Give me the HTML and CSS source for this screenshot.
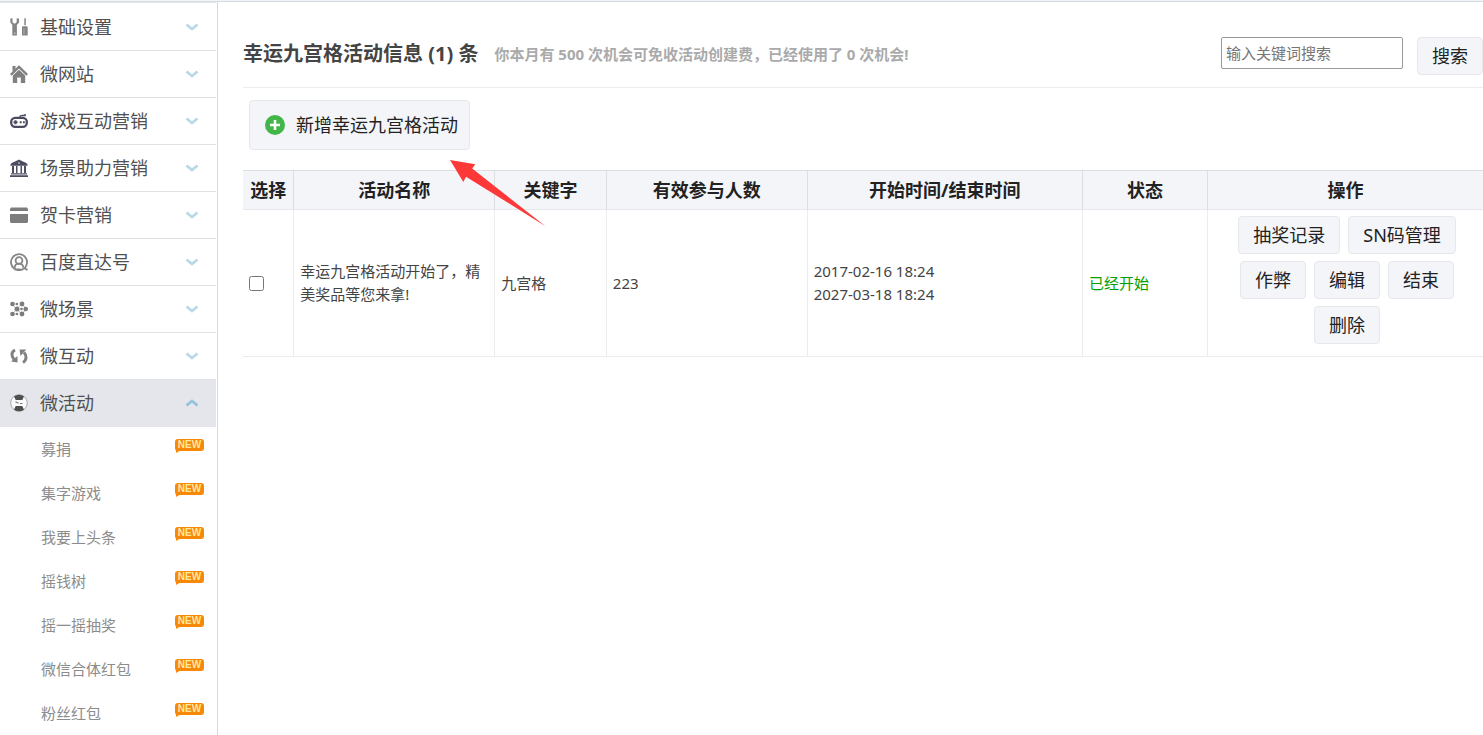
FILE: index.html
```html
<!DOCTYPE html>
<html lang="zh-CN">
<head>
<meta charset="utf-8">
<meta name="viewport" content="width=device-width, initial-scale=1">
<title>幸运九宫格活动信息</title>
<link rel="stylesheet" href="styles.css">
</head>
<body>
<svg class="defs" aria-hidden="true">
  <symbol id="down" viewBox="0 0 14 8"><path d="M1.500 1.500 7 6 12.500 1.500" fill="none" stroke="currentColor" stroke-width="2.800"/></symbol>
</svg>
<div class="topline"></div>
<div class="layout">
  <nav class="sidebar">
    <ul class="menu">
      <li><a class="item" href="#">
        <svg class="icon" viewBox="0 0 18 18" fill="#858585"><path d="M.3.5 2.500.2v3.700l1.500 1.500h1.200l1.500-1.500V.2l2.200.3.3 3.700-2.300 2.900V17.500H2.300V7.100L.3 4.200zM14.300.2h1.500v7h-1.500zM12.500 8.300h4.500l.7 1v8.200H12V9.300z"/><path d="M3.900 14.500h1.500V16H3.900z" fill="#bbb"/><path d="M14 10.500v6" stroke="#aaa"/></svg>
        <span>基础设置</span><svg class="chevron"><use href="#down"/></svg></a></li>
      <li><a class="item" href="#">
        <svg class="icon" viewBox="0 0 18 18" fill="#808080"><path d="M2.500 1h3v3.200l-3 2.500z"/><path d="M.8 9.800 9 2l8.200 7.800" fill="none" stroke="#808080" stroke-width="2.400"/><path d="M2.800 10.500 9 4.800l6.200 5.700V18h-4.400v-5.500H7.200V18H2.800z"/></svg>
        <span>微网站</span><svg class="chevron"><use href="#down"/></svg></a></li>
      <li><a class="item" href="#">
        <svg class="icon" viewBox="0 0 18 18" fill="none" stroke="#4b4b60"><path d="M10 5.500c0-2 .5-2 2.500-2h2.500V2" stroke-width="1.500"/><rect x="1.200" y="5.800" width="15.600" height="9" rx="4" stroke-width="2.300"/><path d="M3.500 10.300h4M5.500 8.300v4" stroke-width="2"/><path d="M9.700 10.300h2M13 10.300h1.800" stroke-width="2"/></svg>
        <span>游戏互动营销</span><svg class="chevron"><use href="#down"/></svg></a></li>
      <li><a class="item" href="#">
        <svg class="icon" viewBox="0 0 18 18" fill="#4c4c60"><path d="M.5 5.500C1 3.500 6 2.500 9 .5c3 2 8 3 8.500 5v1.200H.5zM2 7h2v7H2zm4 0h1.500v7H6zm4.500 0H12v7h-1.500zM14 7h2v7h-2zM1 14.300h16v1.300H1zM0 16.300h18V18H0z"/><circle cx="9" cy="4" r="1" fill="#aaa"/></svg>
        <span>场景助力营销</span><svg class="chevron"><use href="#down"/></svg></a></li>
      <li><a class="item" href="#">
        <svg class="icon" viewBox="0 0 18 18" fill="#7d7d7d"><path d="M1 1.500h16L18 3v2H0V3zM0 8h18v8l-1 1H1l-1-1z"/></svg>
        <span>贺卡营销</span><svg class="chevron"><use href="#down"/></svg></a></li>
      <li><a class="item" href="#">
        <svg class="icon" viewBox="0 0 18 18" fill="none" stroke="#858585" stroke-width="1.800"><path d="M13.500 15.800A8 8 0 1 1 16.500 12c-.5 1.500-1.200 2.500-2 3.300l3 1.800M4.500 16.500h6"/><circle cx="9" cy="7.500" r="3.400"/><path d="M4.800 14.700c0-2.500 1.800-4 4.200-4s4.200 1.500 4.200 4"/></svg>
        <span>百度直达号</span><svg class="chevron"><use href="#down"/></svg></a></li>
      <li><a class="item" href="#">
        <svg class="icon" viewBox="0 0 18 18" fill="#7c7c7c"><path d="M2 4.500 7 9l5-5.500L16 9l-4 5.500L7 9l-5 5M2 4h4M2 14h4" fill="none" stroke="#bbb"/><circle cx="2.500" cy="4" r="2.300"/><circle cx="12" cy="4" r="2.400"/><circle cx="7" cy="9" r="2.500"/><circle cx="15.700" cy="9" r="2.300"/><circle cx="2.500" cy="14" r="2.300"/><circle cx="12" cy="14" r="2.400"/><circle cx="11.500" cy="9" r="1.300"/><circle cx="7" cy="4" r="1.200"/><circle cx="7" cy="14" r="1.200"/></svg>
        <span>微场景</span><svg class="chevron"><use href="#down"/></svg></a></li>
      <li><a class="item" href="#">
        <svg class="icon" viewBox="0 0 18 18" fill="none" stroke="#818181" stroke-width="3"><path d="M5 3C1.200 5 1 9 4 12.500M13 15.500c3.800-2.500 4-7 1-10"/><path d="M1 14.500 7.500 9v6.500zM9.500 2.500h6.800L10.500 9z" fill="#818181" stroke="none"/></svg>
        <span>微互动</span><svg class="chevron"><use href="#down"/></svg></a></li>
      <li><a class="item active" href="#" aria-expanded="true">
        <svg class="icon" viewBox="0 0 18 18"><circle cx="9" cy="9" r="8.300" fill="#fafafa" stroke="#aaa"/><path d="M4 2.200Q9-.8 14 2.200L12.300 6H5.700zM4 15.800q5 3 10 0L12.300 12H5.700z" fill="#4e4e4e"/><path d="M5.500 7.800 8.500 9.300M10 9.500h2.500" stroke="#777" stroke-width="1.200"/></svg>
        <span>微活动</span><svg class="chevron up"><use href="#down"/></svg></a>
        <ul class="submenu">
          <li><a href="#">募捐<span class="badge">NEW</span></a></li>
          <li><a href="#">集字游戏<span class="badge">NEW</span></a></li>
          <li><a href="#">我要上头条<span class="badge">NEW</span></a></li>
          <li><a href="#">摇钱树<span class="badge">NEW</span></a></li>
          <li><a href="#">摇一摇抽奖<span class="badge">NEW</span></a></li>
          <li><a href="#">微信合体红包<span class="badge">NEW</span></a></li>
          <li><a href="#">粉丝红包<span class="badge">NEW</span></a></li>
        </ul>
      </li>
    </ul>
  </nav>
  <main class="main">
    <header class="head">
      <h1>幸运九宫格活动信息 (1) 条</h1>
      <p class="quota">你本月有 500 次机会可免收活动创建费，已经使用了 0 次机会!</p>
      <form class="search">
        <input type="text" placeholder="输入关键词搜索" aria-label="输入关键词搜索">
        <button class="btn" type="button">搜索</button>
      </form>
    </header>
    <div class="toolbar">
      <button class="btn add" type="button">
        <svg class="plus" viewBox="0 0 20 20"><circle cx="10" cy="10" r="10" fill="#43b649"/><path d="M10 5v10M5 10h10" stroke="#fff" stroke-width="2.600"/></svg>
        <span>新增幸运九宫格活动</span>
      </button>
      <svg class="arrow" viewBox="0 0 96 67" aria-hidden="true"><path d="M0 0 25.300 4.200 22.200 8.500 95.500 66.200 16 16.700 13.300 22z" fill="#fd3838"/></svg>
    </div>
    <table class="list">
      <colgroup><col class="c-pick"><col class="c-name"><col class="c-key"><col class="c-name"><col class="c-time"><col class="c-state"><col></colgroup>
      <thead>
        <tr><th>选择</th><th>活动名称</th><th>关键字</th><th>有效参与人数</th><th>开始时间/结束时间</th><th>状态</th><th>操作</th></tr>
      </thead>
      <tbody>
        <tr>
          <td><input type="checkbox" aria-label="选择活动"></td>
          <td>幸运九宫格活动开始了，精美奖品等您来拿!</td>
          <td>九宫格</td>
          <td>223</td>
          <td>2017-02-16 18:24<br>2027-03-18 18:24</td>
          <td class="started">已经开始</td>
          <td class="ops"><div class="actions">
            <button class="btn" type="button">抽奖记录</button>
            <button class="btn" type="button">SN码管理</button>
            <button class="btn" type="button">作弊</button>
            <button class="btn" type="button">编辑</button>
            <button class="btn" type="button">结束</button>
            <button class="btn" type="button">删除</button>
          </div></td>
        </tr>
      </tbody>
    </table>
  </main>
</div>
</body>
</html>
```

FILE: styles.css
```css
* { box-sizing: border-box; }

body {
  margin: 0;
  min-height: 100vh;
  display: flex;
  flex-direction: column;
  background: #fff;
  color: #444;
  font: 15px/23px "Noto Sans", "Noto Sans CJK SC", sans-serif;
}

ul { list-style: none; margin: 0; padding: 0; }
a { color: inherit; text-decoration: none; }
button, input { font-family: inherit; }

.defs { position: absolute; width: 0; height: 0; }

.topline {
  height: 2px;
  background: #f0f3f7;
  border-bottom: 1px solid #d8dde2;
}

.layout { display: flex; flex: 1; }

/* Sidebar */
.sidebar {
  flex: none;
  width: 218px;
  padding-right: 1px;
  border-right: 1px solid #d5d9e2;
}

.menu { border-top: 1px solid #e4e4e7; padding-top: 1px; }

.item {
  display: flex;
  align-items: center;
  height: 47px;
  padding: 0 17px 0 10px;
  border-bottom: 1px solid #e2e2e5;
  color: #505050;
  font-size: 18px;
}

.item span { flex: 1; margin-left: 12px; }
.item.active { background: #e5e6eb; border-color: #e5e6eb; }
.icon { width: 18px; height: 18px; }
.chevron { width: 14px; height: 8px; color: #b9d9e8; }
.chevron.up { color: #93c3dc; transform: rotate(180deg); }

.submenu a {
  display: flex;
  justify-content: space-between;
  height: 44px;
  padding: 12px 12px 0 41px;
  color: #8c8c8c;
  line-height: 20px;
}

.badge {
  position: relative;
  width: 29px;
  height: 12px;
  border-radius: 3px;
  background: #f88808;
  color: #ffe9a0;
  font: bold 10px/12px "Liberation Sans", sans-serif;
  text-align: center;
}

/* Speech-bubble tail */
.badge::after {
  content: "";
  position: absolute;
  left: 1px;
  top: 11px;
  border: solid transparent;
  border-width: 0 5px 3px 0;
  border-top: 3px solid #f88808;
  border-bottom: 0;
}

/* Content */
.main { flex: 1; min-width: 0; padding-left: 25px; }

.head {
  display: flex;
  align-items: flex-start;
  padding: 35px 0 12px;
  border-bottom: 1px solid #ededed;
}

h1 { margin: 0; font-size: 20px; line-height: 34px; color: #444; }

.quota {
  margin: 0 0 0 16px;
  font-weight: bold;
  line-height: 34px;
  color: #aaa;
}

.search { display: flex; align-items: flex-start; gap: 14px; margin-left: auto; }

.search input {
  width: 182px;
  height: 32px;
  padding: 0 4px;
  border: 1px solid #999;
  border-radius: 2px;
  font-size: 15px;
}

.search input::placeholder { color: #757575; }

.btn {
  height: 38px;
  padding: 0 14px;
  border: 1px solid #e5e7ec;
  border-radius: 4px;
  background: #f4f5f9;
  color: #222;
  font-size: 18px;
  line-height: 34px;
}

.toolbar { position: relative; padding: 12px 6px 20px; }

.add {
  display: flex;
  align-items: center;
  gap: 11px;
  height: 50px;
  padding: 0 11px 0 15px;
}

.plus { width: 20px; height: 20px; }

.arrow {
  position: absolute;
  left: 207px;
  top: 72px;
  width: 96px;
  height: 67px;
}

.list { width: 100%; table-layout: fixed; border-collapse: collapse; }
.c-pick { width: 4.1%; }
.c-name { width: 16.2%; }
.c-key { width: 9%; }
.c-time { width: 22.2%; }
.c-state { width: 10.1%; }

.list th {
  height: 39px;
  padding: 0;
  background: #f4f5f9;
  border: solid #dcdee3;
  border-width: 1px 1px 1px 0;
  border-bottom-color: #e5e7ec;
  color: #222;
  font-size: 18px;
}

.list td {
  padding: 0 6px;
  border: solid #ececef;
  border-width: 0 1px 1px 0;
}

.list th:last-child, .list td:last-child { border-right: 0; }
.list input { display: block; width: 15px; height: 15px; margin: 0; }
.list .started { color: #00a000; }
.list .ops { padding: 6px 0 12px 3px; }

.actions {
  display: flex;
  flex-wrap: wrap;
  justify-content: center;
  gap: 7px 8px;
}
```
